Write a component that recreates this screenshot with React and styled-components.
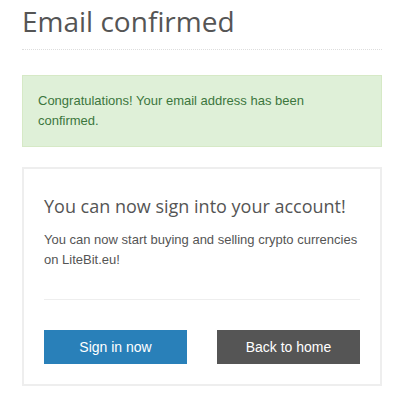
import styled, { createGlobalStyle } from "styled-components";

const GlobalStyle = createGlobalStyle`
    body {
        margin: 0;
        background: #fff;
        font-family: "Liberation Sans", Arial, sans-serif;
        font-size: 13px;
        color: #555;
    }
`

const Page = styled.div`
    width: 360px;
    margin-left: 22px;
`

const PageHeader = styled.h1`
    margin: 0;
    padding: 2px 0 9px;
    font-family: "Open Sans", sans-serif;
    font-weight: 400;
    font-size: 28px;
    line-height: 38px;
    color: #555;
    border-bottom: 1px dotted #ddd;
`

const Alert = styled.div`
    margin-top: 25px;
    padding: 15px;
    background-color: #dff0d8;
    border: 1px solid #d6e9c6;
    color: #3c763d;
    line-height: 20px;
`

const Card = styled.div`
    margin-top: 20px;
    padding: 20px;
    border: 2px solid #eee;
`

const CardTitle = styled.h2`
    margin: 4px 0 0;
    font-family: "Open Sans", sans-serif;
    font-weight: 400;
    font-size: 18px;
    line-height: 27px;
    color: #555;
`

const CardText = styled.p`
    margin: 10px 0 0;
    line-height: 20px;
    color: #555;
`

const Divider = styled.hr`
    margin: 29px 0 0;
    border: 0;
    border-top: 1px solid #eee;
`

const ButtonRow = styled.div`
    margin-top: 30px;
    display: grid;
    grid-template-columns: 1fr 1fr;
    column-gap: 30px;
`

const Button = styled.a`
    display: flex;
    align-items: center;
    justify-content: center;
    height: 34px;
    background-color: ${props => props.$bg};
    color: #fff;
    font-size: 14px;
    text-decoration: none;
    cursor: pointer;
`

export default function App() {
    return (
        <Page>
            <GlobalStyle />
            <PageHeader>Email confirmed</PageHeader>
            <Alert>Congratulations! Your email address has been confirmed.</Alert>
            <Card>
                <CardTitle>You can now sign into your account!</CardTitle>
                <CardText>You can now start buying and selling crypto currencies on LiteBit.eu!</CardText>
                <Divider />
                <ButtonRow>
                    <Button $bg="#2980b9">Sign in now</Button>
                    <Button $bg="#555555">Back to home</Button>
                </ButtonRow>
            </Card>
        </Page>
    )
}
